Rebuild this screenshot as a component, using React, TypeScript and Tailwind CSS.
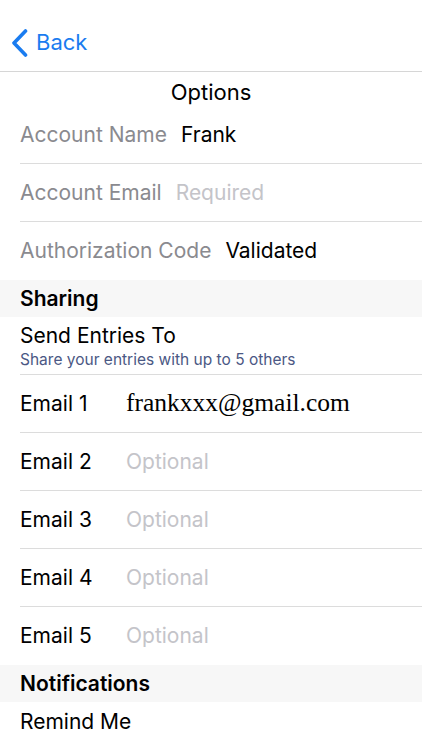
const font = { fontFamily: "Inter, 'Liberation Sans', sans-serif" };

function FieldRow({ label, value, placeholder }: { label: string; value?: string; placeholder?: string }) {
  return (
    <div className="ml-5 h-[58px] flex items-center gap-[14px] border-b border-[#dcdcdc] text-[21px]">
      <span className="text-[#8a8a8f]">{label}</span>
      {value ? <span className="text-black">{value}</span> : <span className="text-[#c4c4c9]">{placeholder}</span>}
    </div>
  );
}

function EmailRow({ n, value, last }: { n: number; value?: string; last?: boolean }) {
  return (
    <div className={`ml-5 h-[58px] flex items-center text-[21px] ${last ? "" : "border-b border-[#dcdcdc]"}`}>
      <span className="w-[106px] text-black">Email {n}</span>
      {value ? (
        <span className="text-[25.5px] text-black" style={{ fontFamily: "'Liberation Serif', serif" }}>
          {value}
        </span>
      ) : (
        <span className="text-[#c4c4c9]">Optional</span>
      )}
    </div>
  );
}

function SectionHeader({ title }: { title: string }) {
  return (
    <div className="h-[37px] bg-[#f7f7f7] flex items-center px-5 text-[21px] font-semibold text-black">{title}</div>
  );
}

export default function App() {
  return (
    <div className="w-[422px] h-[750px] bg-white overflow-hidden" style={font}>
      <div className="h-[72px] flex items-center border-b border-[#d6d6d6] pl-[11px] pt-[14px]">
        <svg width="17" height="28" viewBox="0 0 17 28" fill="none">
          <path d="M14.5 2 L3 14 L14.5 26" stroke="#1a7cf0" strokeWidth="3.6" strokeLinecap="round" strokeLinejoin="round" />
        </svg>
        <span className="text-[22px] text-[#1a7cf0] ml-[8px]">Back</span>
      </div>
      <div className="h-[34px] flex items-end justify-center text-[22px] text-black leading-none pb-[3px]">Options</div>
      <FieldRow label="Account Name" value="Frank" />
      <FieldRow label="Account Email" placeholder="Required" />
      <div className="ml-5 h-[58px] flex items-center gap-[14px] text-[21px]">
        <span className="text-[#8a8a8f]">Authorization Code</span>
        <span className="text-black">Validated</span>
      </div>
      <SectionHeader title="Sharing" />
      <div className="ml-5 h-[58px] flex flex-col justify-center border-b border-[#dcdcdc] pt-[2px]">
        <span className="text-[21px] text-black leading-[26px]">Send Entries To</span>
        <span className="text-[15.5px] text-[#4b5884] leading-[21px]">Share your entries with up to 5 others</span>
      </div>
      <EmailRow n={1} value="frankxxx@gmail.com" />
      <EmailRow n={2} />
      <EmailRow n={3} />
      <EmailRow n={4} />
      <EmailRow n={5} last />
      <SectionHeader title="Notifications" />
      <div className="ml-5 h-[40px] flex items-center text-[21px] text-black">Remind Me</div>
    </div>
  );
}
